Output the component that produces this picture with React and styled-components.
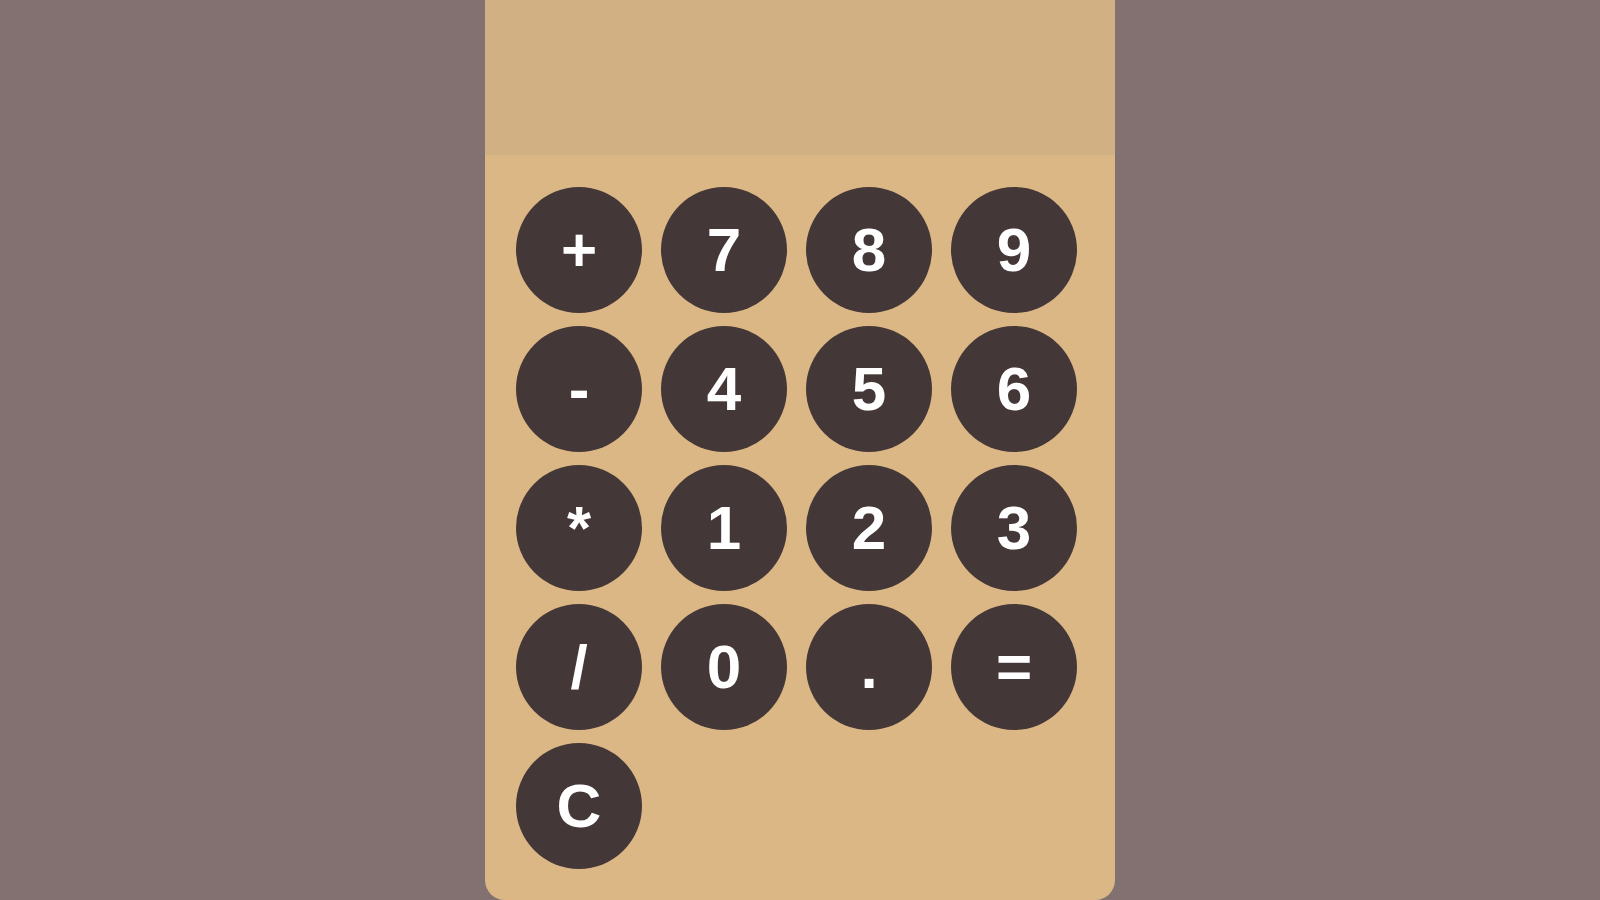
import React from "react";
import styled, { createGlobalStyle } from "styled-components";

const GlobalStyle = createGlobalStyle`
    body {
        margin: 0;
        background-color: #837171;
        font-family: "Liberation Sans", Arial, sans-serif;
    }
`;

const Page = styled.div`
    display: flex;
    justify-content: center;
`;

const Calculator = styled.div`
    width: 630px;
    height: 900px;
    background-color: #dcb786;
    border-radius: 0 0 20px 20px;
`;

const Display = styled.div`
    height: 155px;
    background-color: #d1b083;
`;

const Keys = styled.div`
    display: grid;
    grid-template-columns: repeat(4, 126px);
    column-gap: 19px;
    row-gap: 13px;
    padding: 32px 31px;
`;

const Key = styled.div`
    width: 126px;
    height: 126px;
    border-radius: 50%;
    background-color: #443737;
    color: #ffffff;
    font-weight: 700;
    font-size: 62px;
    text-align: center;
    line-height: 126px;
    cursor: pointer;
`;

const keys = ["+", "7", "8", "9", "-", "4", "5", "6", "*", "1", "2", "3", "/", "0", ".", "=", "C"];

function App() {
    return (
        <Page>
            <GlobalStyle />
            <Calculator>
                <Display />
                <Keys>
                    {keys.map((k) => (
                        <Key key={k}>{k}</Key>
                    ))}
                </Keys>
            </Calculator>
        </Page>
    );
}

export default App;
